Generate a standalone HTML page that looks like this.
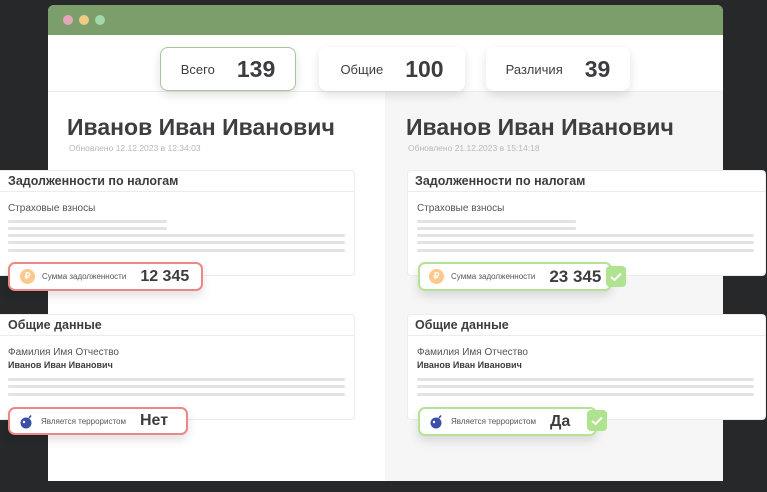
<!DOCTYPE html>
<html><head><meta charset="utf-8"><style>
*{margin:0;padding:0;box-sizing:border-box}
body{width:767px;height:492px;background:#27282a;position:relative;overflow:hidden;font-family:"Liberation Sans",Arial,sans-serif;color:#3d3d40}
.abs{position:absolute}
.win{left:48px;top:5px;width:675px;height:476px;background:#fff;border-radius:6px 6px 0 0;overflow:hidden}
.bar{left:0;top:0;width:675px;height:30px;background:#7b9e6b}
.dot{width:10px;height:10px;border-radius:50%;top:10px}
.rp{left:337px;top:87px;width:338px;height:389px;background:#f6f6f6}
.hline{left:0;top:86px;width:675px;height:1px;background:#ececec}
.stat{background:#fff;border-radius:8px;box-shadow:0 4px 10px rgba(0,0,0,.12);height:44px;display:flex;align-items:center;justify-content:center;gap:22px}
.stat span{font-size:13px}
.stat b{font-size:23px;font-weight:bold}
.name{font-size:23px;font-weight:bold;color:#3e3e42}
.upd{font-size:8.5px;color:#b8b8b8}
.card{background:#fff;border:1px solid #ececec;border-radius:4px}
.ch{height:21px;border-bottom:1px solid #ececec;font-size:12.5px;font-weight:bold;padding:3px 0 0 7px}
.lbl{font-size:10px;color:#555}
.ln{height:3px;border-radius:2px;background:#e3e3e3}
.chip{background:#fff;border-radius:7px;display:flex;align-items:center;box-shadow:0 5px 10px rgba(0,0,0,.12)}
.red{border:2px solid #ec8787}
.grn{border:2px solid #b5e396}
.rub{width:15px;height:15px;border-radius:50%;background:#fdc88c;color:#fff;font-size:9px;font-weight:bold;text-align:center;line-height:15px}
.chip small{font-size:8px;color:#555}
.chip b{font-size:16px;font-weight:bold}
.chk{width:20px;height:21px;border-radius:4px;background:#b0e38f}
</style></head><body>
<div class="abs win">
 <div class="abs bar"></div>
 <div class="abs dot" style="left:15px;background:#e7a5bb"></div>
 <div class="abs dot" style="left:31px;background:#efcc85"></div>
 <div class="abs dot" style="left:47px;background:#9fd9ac"></div>
 <div class="abs hline"></div>
 <div class="abs rp"></div>
</div>
<div class="abs stat" style="left:160px;top:47px;width:136px;border:1px solid #a9c59b"><span>Всего</span><b>139</b></div>
<div class="abs stat" style="left:319px;top:47px;width:146px"><span>Общие</span><b>100</b></div>
<div class="abs stat" style="left:486px;top:47px;width:144px"><span>Различия</span><b>39</b></div>

<div class="abs name" style="left:67px;top:114px">Иванов Иван Иванович</div>
<div class="abs upd" style="left:69px;top:143px">Обновлено 12.12.2023 в 12:34:03</div>
<div class="abs name" style="left:406px;top:114px">Иванов Иван Иванович</div>
<div class="abs upd" style="left:408px;top:143px">Обновлено 21.12.2023 в 15:14:18</div>

<div class="abs card" style="left:-4px;top:170px;width:359px;height:106px">
 <div class="ch" style="padding-left:11px">Задолженности по налогам</div>
 <div class="abs lbl" style="left:11px;top:32px">Страховые взносы</div>
 <div class="abs ln" style="left:11px;top:49px;width:159px"></div>
 <div class="abs ln" style="left:11px;top:56px;width:159px"></div>
 <div class="abs ln" style="left:11px;top:63px;width:337px"></div>
 <div class="abs ln" style="left:11px;top:70px;width:337px"></div>
 <div class="abs ln" style="left:11px;top:78px;width:337px"></div>
</div>
<div class="abs chip red" style="left:8px;top:262px;width:195px;height:29px">
 <div class="rub" style="margin-left:10px">₽</div><small style="margin-left:7px">Сумма задолженности</small><b style="margin-left:14px">12 345</b>
</div>

<div class="abs card" style="left:407px;top:170px;width:359px;height:106px">
 <div class="ch">Задолженности по налогам</div>
 <div class="abs lbl" style="left:9px;top:32px">Страховые взносы</div>
 <div class="abs ln" style="left:9px;top:49px;width:159px"></div>
 <div class="abs ln" style="left:9px;top:56px;width:159px"></div>
 <div class="abs ln" style="left:9px;top:63px;width:337px"></div>
 <div class="abs ln" style="left:9px;top:70px;width:337px"></div>
 <div class="abs ln" style="left:9px;top:78px;width:337px"></div>
</div>
<div class="abs chip grn" style="left:418px;top:262px;width:194px;height:29px">
 <div class="rub" style="margin-left:9px">₽</div><small style="margin-left:7px">Сумма задолженности</small><b style="margin-left:14px;font-size:17px">23 345</b>
</div>
<div class="abs chk" style="left:606px;top:266px"><svg width="20" height="21"><path d="M5 11l3.5 3 6.5-6.5" stroke="#fff" stroke-width="2" fill="none"/></svg></div>

<div class="abs card" style="left:-4px;top:314px;width:359px;height:106px">
 <div class="ch" style="padding-left:11px">Общие данные</div>
 <div class="abs lbl" style="left:11px;top:32px">Фамилия Имя Отчество</div>
 <div class="abs" style="left:11px;top:45px;font-size:9px;font-weight:bold">Иванов Иван Иванович</div>
 <div class="abs ln" style="left:11px;top:63px;width:337px"></div>
 <div class="abs ln" style="left:11px;top:70px;width:337px"></div>
 <div class="abs ln" style="left:11px;top:78px;width:337px"></div>
</div>
<div class="abs chip red" style="left:8px;top:407px;width:180px;height:28px">
 <svg style="margin-left:9px" width="15" height="15" viewBox="0 0 15 15"><circle cx="7" cy="9" r="5.5" fill="#3b4fa6"/><path d="M10 4l2-2.5" stroke="#3b4fa6" stroke-width="1.6"/><circle cx="5" cy="8" r="1.2" fill="#fff"/></svg>
 <small style="margin-left:7px">Является террористом</small><b style="margin-left:14px">Нет</b>
</div>

<div class="abs card" style="left:407px;top:314px;width:359px;height:106px">
 <div class="ch">Общие данные</div>
 <div class="abs lbl" style="left:9px;top:32px">Фамилия Имя Отчество</div>
 <div class="abs" style="left:9px;top:45px;font-size:9px;font-weight:bold">Иванов Иван Иванович</div>
 <div class="abs ln" style="left:9px;top:63px;width:337px"></div>
 <div class="abs ln" style="left:9px;top:70px;width:337px"></div>
 <div class="abs ln" style="left:9px;top:78px;width:337px"></div>
</div>
<div class="abs chip grn" style="left:418px;top:407px;width:179px;height:29px">
 <svg style="margin-left:9px" width="15" height="15" viewBox="0 0 15 15"><circle cx="7" cy="9" r="5.5" fill="#3b4fa6"/><path d="M10 4l2-2.5" stroke="#3b4fa6" stroke-width="1.6"/><circle cx="5" cy="8" r="1.2" fill="#fff"/></svg>
 <small style="margin-left:7px">Является террористом</small><b style="margin-left:14px">Да</b>
</div>
<div class="abs chk" style="left:587px;top:410px"><svg width="20" height="21"><path d="M5 11l3.5 3 6.5-6.5" stroke="#fff" stroke-width="2" fill="none"/></svg></div>
</body></html>
